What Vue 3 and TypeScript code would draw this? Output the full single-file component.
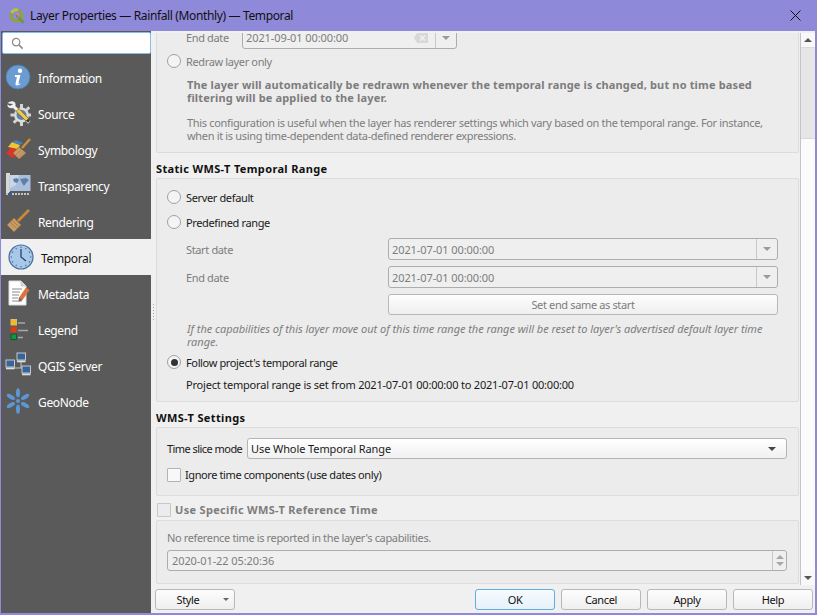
<script setup lang="ts">
const items = [
  { id: 'info', label: 'Information' },
  { id: 'source', label: 'Source' },
  { id: 'symbology', label: 'Symbology' },
  { id: 'transparency', label: 'Transparency' },
  { id: 'rendering', label: 'Rendering' },
  { id: 'temporal', label: 'Temporal' },
  { id: 'metadata', label: 'Metadata' },
  { id: 'legend', label: 'Legend' },
  { id: 'server', label: 'QGIS Server' },
  { id: 'geonode', label: 'GeoNode' },
]
const ticks = Array.from({ length: 12 }, (_, i) => i * 30)
const spokes = [0, 60, 120, 180, 240, 300]
const gearTeeth = [0, 45, 90, 135, 180, 225, 270, 315]
</script>

<template>
  <div class="window">
    <header class="titlebar">
      <svg class="logo" viewBox="0 0 16 16" width="16" height="16">
        <circle cx="7.5" cy="7.5" r="5.6" fill="none" stroke="#86a83c" stroke-width="3" />
        <path d="M2.6 5A5.600 5.600 0 0 1 9 2.100" fill="none" stroke="#b6c24a" stroke-width="3" />
        <path d="M9.500 9.500l5 5.200" stroke="#6f9a34" stroke-width="3" fill="none" />
        <path d="M5.500 9l3-4 1.500 3z" fill="#e8a33a" />
        <circle cx="7.800" cy="8" r="1.300" fill="#d05c3a" />
      </svg>
      <span class="title">Layer Properties — Rainfall (Monthly) — Temporal</span>
      <svg class="close" viewBox="0 0 11 11" width="11" height="11">
        <path d="M.5.5l10 10M10.500.5l-10 10" stroke="#111" stroke-width="1" fill="none" />
      </svg>
    </header>

    <div class="body">
      <aside class="sidebar">
        <div class="search">
          <svg viewBox="0 0 14 14" width="13" height="13">
            <circle cx="5.500" cy="5.500" r="4" fill="none" stroke="#8a8a8a" stroke-width="1.300" />
            <path d="M8.500 8.500l4 4" stroke="#8a8a8a" stroke-width="1.800" />
          </svg>
        </div>
        <ul class="nav">
          <li v-for="item in items" :key="item.id" class="nav-item" :class="{ active: item.id === 'temporal' }">
            <svg class="nav-icon" viewBox="0 0 26 26" width="26" height="26">
              <template v-if="item.id === 'info'">
                <circle cx="13" cy="13" r="12" fill="#6b9bd0" stroke="#4c7fb8" />
                <circle cx="15" cy="6.800" r="2.200" fill="#fff" />
                <path d="M10 11h5.400l-2 8.500c-.1.600.4.700 1.800-.2l.3.700c-1.800 1.600-5.400 2.400-5-.2l1.400-6.800h-2z" fill="#fff" />
              </template>
              <template v-else-if="item.id === 'source'">
                <path
                  v-for="t in gearTeeth"
                  :key="t"
                  d="M15 4h3v4h-3z"
                  fill="#d4d4d4"
                  :transform="`rotate(${t} 16.500 15)`"
                />
                <circle cx="16.500" cy="15" r="7.500" fill="#dcdcdc" />
                <circle cx="16.500" cy="15" r="5" fill="#5e82ad" />
                <path d="M2 3.500c2-3 7-3.500 8.500-.5.500 1.200.4 2 .2 3l4 4-2.400 2.200-4-4c-3 1-6.500-.5-6.300-4.300l3 1.600 2.500-1.200z" fill="#f2f2f2" stroke="#444" stroke-width=".5" />
                <path d="M11 11.500l10 9.500 2.500-2.500-9.500-10z" fill="#ecc94f" stroke="#6b5518" stroke-width=".7" />
                <path d="M21 21l3.500 1.800-1-3.800z" fill="#2a2a2a" />
              </template>
              <template v-else-if="item.id === 'symbology'">
                <path d="M1 17l5-6 7 2-2 7-4 2z" fill="#d8352b" />
                <path d="M3 11l4-5 8 3-2 4z" fill="#edc72f" />
                <path d="M7 6l4-2 7 3-3 2z" fill="#4a80bd" />
                <path d="M8 17l6-6 7 6-7 6z" fill="#c99a68" stroke="#946c40" stroke-width=".6" />
                <path d="M11 19l5-5M13.500 21l5-5" stroke="#946c40" stroke-width=".5" />
                <path d="M17 12l8-9" stroke="#d0913a" stroke-width="2.400" />
              </template>
              <template v-else-if="item.id === 'transparency'">
                <rect x="1" y="1" width="4" height="20" fill="#d8d8d8" />
                <rect x="4.500" y="3" width="21" height="16" fill="#a9bfdc" />
                <path d="M5 3h9l-3 10-6 3z" fill="#c8d6e8" />
                <path d="M8 7l4-1 2 2-2 3-3-1zM15 7l6-1 3 2-3 3-2 3-2-3z" fill="#5f7ea8" />
                <path d="M1 22h24" stroke="#c4c4c4" stroke-width="2" stroke-dasharray="2 1" />
                <rect x="4" y="20" width="2" height="4" fill="#2d5ca0" />
              </template>
              <template v-else-if="item.id === 'rendering'">
                <path d="M2 17l7-7 7 7-7 7z" fill="#c89a66" stroke="#94703f" stroke-width=".7" />
                <path d="M5 14l7 7M7 12l7 7" stroke="#94703f" stroke-width=".6" />
                <path d="M13 13l11-11" stroke="#c88a34" stroke-width="2.600" />
              </template>
              <template v-else-if="item.id === 'temporal'">
                <circle cx="13" cy="13" r="12" fill="#a8c8ea" stroke="#4a6f9c" stroke-width="1.200" />
                <path
                  v-for="t in ticks"
                  :key="t"
                  d="M13 2.600v1.400"
                  stroke="#3f6592"
                  stroke-width="1"
                  :transform="`rotate(${t} 13 13)`"
                />
                <path d="M13 5v8l5 4" fill="none" stroke="#2c4360" stroke-width="1.300" />
              </template>
              <template v-else-if="item.id === 'metadata'">
                <path d="M4 1h12l5 5v19H4z" fill="#fff" stroke="#ddd" />
                <path d="M16 1v5h5" fill="#d8d8d8" stroke="#bbb" stroke-width=".6" />
                <path d="M7 9h10M7 12h8M7 15h7M7 18h6M7 21h10" stroke="#8a8a8a" stroke-width="1" />
                <path d="M14 17.500l7-10 3.500 2.500-7 10-3.800 1.500z" fill="#e0723c" />
                <path d="M14 17.500l-.3 4 3.800-1.500z" fill="#6a6a6a" />
              </template>
              <template v-else-if="item.id === 'legend'">
                <rect x="6" y="3.500" width="5.500" height="5.500" fill="#f4b820" stroke="#d8c070" />
                <rect x="6" y="11" width="5.500" height="5.500" fill="#e23c0c" stroke="#a84a30" />
                <rect x="6" y="18" width="5.500" height="5.500" fill="#13954a" stroke="#0d5a2e" />
                <path d="M13 7h7M13 14.500h10M13 21.500h5" stroke="#a8a8a8" stroke-width="1.600" />
              </template>
              <template v-else-if="item.id === 'server'">
                <path d="M16 10v6H9M16 16h3" stroke="#c4c4c4" fill="none" />
                <rect x="12" y="1" width="8.500" height="7" fill="#36659e" stroke="#c8c8c8" />
                <rect x="12" y="8.500" width="8.500" height="1.800" fill="#dedede" />
                <rect x="1" y="8" width="8.500" height="7" fill="#36659e" stroke="#c8c8c8" />
                <rect x="1" y="15.500" width="8.500" height="1.800" fill="#dedede" />
                <rect x="17" y="14" width="8.500" height="7" fill="#36659e" stroke="#c8c8c8" />
                <rect x="17" y="21.500" width="8.500" height="1.800" fill="#dedede" />
              </template>
              <template v-else>
                <circle cx="13" cy="13" r="2" fill="#5b97d5" />
                <ellipse
                  v-for="s in spokes"
                  :key="s"
                  cx="13"
                  cy="4.800"
                  rx="2"
                  ry="4.600"
                  fill="#5b97d5"
                  :transform="`rotate(${s} 13 13)`"
                />
              </template>
            </svg>
            <span class="nav-label">{{ item.label }}</span>
          </li>
        </ul>
      </aside>

      <div class="splitter"><i v-for="n in 6" :key="n"></i></div>

      <main class="main">
        <div class="scroll">
          <div class="content">
            <section class="group first dim">
              <div class="row end-row">
                <span class="lbl small-lbl">End date</span>
                <div class="combo short">
                  <span class="val">2021-09-01 00:00:00</span>
                  <svg class="clear" viewBox="0 0 14 10" width="14" height="10">
                    <path d="M3 0h11v10H3L0 5z" fill="#d8d8d8" />
                    <path d="M6 2.500l5 5M11 2.500l-5 5" stroke="#f2f2f2" stroke-width="1.400" />
                  </svg>
                  <span class="drop"><b class="arrow"></b></span>
                </div>
              </div>
              <label class="radio-row r-redraw"><span class="radio"></span><span>Redraw layer only</span></label>
              <p class="bold-note">The layer will automatically be redrawn whenever the temporal range is changed, but no time based<br />filtering will be applied to the layer.</p>
              <p class="note">This configuration is useful when the layer has renderer settings which vary based on the temporal range. For instance,<br />when it is using time-dependent data-defined renderer expressions.</p>
            </section>

            <h3 class="heading h-static">Static WMS-T Temporal Range</h3>
            <section class="group g-static">
              <label class="radio-row"><span class="radio"></span><span>Server default</span></label>
              <label class="radio-row r-pre"><span class="radio"></span><span>Predefined range</span></label>
              <div class="dates dim">
                <span class="lbl">Start date</span>
                <div class="combo"><span class="val">2021-07-01 00:00:00</span><span class="drop"><b class="arrow"></b></span></div>
                <span class="lbl">End date</span>
                <div class="combo"><span class="val">2021-07-01 00:00:00</span><span class="drop"><b class="arrow"></b></span></div>
                <span></span>
                <div class="btn set-end">Set end same as start</div>
              </div>
              <p class="italic-note">If the capabilities of this layer move out of this time range the range will be reset to layer's advertised default layer time<br />range.</p>
              <label class="radio-row r-follow"><span class="radio on"></span><span>Follow project's temporal range</span></label>
              <p class="project">Project temporal range is set from 2021-07-01 00:00:00 to 2021-07-01 00:00:00</p>
            </section>

            <h3 class="heading h-wms">WMS-T Settings</h3>
            <section class="group g-wms">
              <div class="slice">
                <span class="slice-lbl">Time slice mode</span>
                <div class="combo active-combo"><span class="val">Use Whole Temporal Range</span><span class="plain-drop"><b class="arrow dark"></b></span></div>
              </div>
              <label class="check-row"><span class="check"></span><span>Ignore time components (use dates only)</span></label>
            </section>

            <h3 class="heading h-ref"><span class="check head-check"></span><span>Use Specific WMS-T Reference Time</span></h3>
            <section class="group g-ref dim">
              <p class="ref-note">No reference time is reported in the layer's capabilities.</p>
              <div class="spin">
                <span class="val">2020-01-22 05:20:36</span>
                <span class="spin-btn"><b class="up"></b><b class="down"></b></span>
              </div>
            </section>
          </div>
          <div class="scrollbar">
            <div class="sb-btn"><b class="up dark-b"></b></div>
            <div class="sb-thumb"></div>
            <div class="sb-track"></div>
            <div class="sb-btn"><b class="down dark-b"></b></div>
          </div>
        </div>

        <footer class="buttons">
          <div class="btn style-btn"><span>Style</span><b class="arrow small"></b></div>
          <div class="spacer"></div>
          <div class="btn action ok">OK</div>
          <div class="btn action">Cancel</div>
          <div class="btn action">Apply</div>
          <div class="btn action">Help</div>
        </footer>
      </main>
    </div>
  </div>
</template>

<style>
html, body { margin: 0; padding: 0; background: #f0f0f0; }
</style>

<style scoped>
.window {
  width: 817px;
  height: 615px;
  box-sizing: border-box;
  display: flex;
  flex-direction: column;
  background: #f0f0f0;
  border: 1px solid #8f89d9;
  border-width: 0 2px 2px 1px;
  font-family: "Noto Sans", "Liberation Sans", sans-serif;
  font-size: 11px;
  letter-spacing: -0.36px;
  color: #1a1a1a;
  overflow: hidden;
}
.titlebar {
  flex: 0 0 31px;
  margin: 0 -2px 0 -1px;
  display: flex;
  align-items: center;
  background: #8f89d9;
  padding: 0 16px 0 9px;
  font-size: 12px;
  color: #101010;
}
.logo { margin-right: 5px; }
.title { flex: 1; }
.close { display: block; }
.body { flex: 1; display: flex; min-height: 0; }

.sidebar { width: 150px; background: #5a5a5a; flex: none; }
.search {
  height: 20px;
  background: #fff;
  border: 1px solid #86bde9;
  border-radius: 2px;
  margin: 1px 0 0 1px;
  display: flex;
  align-items: center;
  padding-left: 8px;
  box-sizing: content-box;
  width: 139px;
}
.nav { list-style: none; margin: 5px 0 0; padding: 0; }
.nav-item {
  height: 36px;
  display: flex;
  align-items: center;
  padding-left: 4px;
  color: #fff;
  font-size: 12px;
}
.nav-icon { flex: none; margin-right: 7px; }
.nav-label { margin-top: 2px; }
.nav-item.active { background: #f0f0f0; color: #111; padding-left: 7px; }

.splitter {
  width: 4px;
  flex: none;
  display: flex;
  flex-direction: column;
  justify-content: center;
  align-items: center;
  gap: 2px;
  padding-bottom: 20px;
}
.splitter i { width: 1px; height: 1px; background: #a8a8a8; }

.main { flex: 1; display: flex; flex-direction: column; min-width: 0; }
.scroll { flex: 0 0 552px; margin-top: 2px; display: flex; overflow: hidden; }
.content { flex: 1; min-width: 0; padding-left: 1px; }

.group {
  box-sizing: border-box;
  background: #ececec;
  border: 1px solid #dcdcdc;
  border-radius: 2px;
  margin-right: 1px;
}
.first { margin-top: -8px; height: 128px; padding: 0 10px; border-top: 0; }
.dim { color: #7d7d7d; }
.row { display: flex; align-items: center; }
.end-row { height: 25px; padding-left: 19px; }
.small-lbl { width: 56px; }
.combo {
  box-sizing: border-box;
  height: 22px;
  display: flex;
  align-items: center;
  border: 1px solid #adadad;
  border-radius: 3px;
  background: #efefef;
  padding-left: 3px;
  flex: 1;
}
.combo.short { flex: none; width: 215px; height: 23px; }
.val { flex: 1; letter-spacing: -0.09px; }
.clear { margin-right: 7px; }
.drop {
  align-self: stretch;
  width: 20px;
  border-left: 1px solid #c8c8c8;
  display: flex;
  align-items: center;
  justify-content: center;
}
.plain-drop { width: 20px; display: flex; justify-content: center; margin-right: 4px; }
.arrow {
  display: block;
  width: 0;
  height: 0;
  border-left: 4px solid transparent;
  border-right: 4px solid transparent;
  border-top: 4px solid #9a9a9a;
}
.arrow.dark { border-top-color: #444; }
.arrow.small { border-left-width: 3px; border-right-width: 3px; border-top-width: 3px; border-top-color: #666; }

.radio-row { display: flex; align-items: center; height: 16px; gap: 5px; }
.radio {
  box-sizing: border-box;
  width: 14px;
  height: 14px;
  border-radius: 50%;
  border: 1px solid #a0a0a0;
  background: #f4f4f4;
  flex: none;
  display: flex;
  align-items: center;
  justify-content: center;
}
.radio.on::after {
  content: "";
  width: 7px;
  height: 7px;
  border-radius: 50%;
  background: #333;
}
.r-redraw { margin-top: 3px; }
.bold-note { margin: 9px 0 0 20px; font-weight: 700; line-height: 13px; letter-spacing: 0.15px; }
.note { margin: 12px 0 0 20px; line-height: 13px; letter-spacing: -0.33px; }

.heading { margin: 0; font-size: 11px; font-weight: 700; line-height: 14px; color: #111; letter-spacing: 0.35px; }
.h-static { margin-top: 9px; }
.g-static { margin-top: 2px; height: 224px; padding: 10px 10px 0; }
.r-pre { margin-top: 9px; }
.dates {
  display: grid;
  grid-template-columns: 202px 390px;
  margin: 8px 0 0 19px;
  align-items: center;
  row-gap: 6px;
}
.set-end { height: 20px; color: #7d7d7d; }
.btn {
  box-sizing: border-box;
  height: 21px;
  border: 1px solid #b8b8b8;
  border-radius: 3px;
  background: linear-gradient(#fdfdfd, #efefef);
  display: flex;
  align-items: center;
  justify-content: center;
}
.italic-note { margin: 7px 0 0 20px; font-style: italic; line-height: 13px; color: #7d7d7d; letter-spacing: -0.04px; }
.r-follow { margin-top: 6px; }
.project { margin: 7px 0 0 19px; line-height: 16px; letter-spacing: -0.2px; }

.h-wms { margin-top: 9px; }
.g-wms { margin-top: 2px; height: 69px; padding: 10px 11px 0 10px; }
.slice { display: flex; align-items: center; }
.slice-lbl { width: 80px; white-space: nowrap; letter-spacing: -0.55px; }
.active-combo { background: linear-gradient(#fff, #f0f0f0); border-color: #b4b4b4; color: #1a1a1a; height: 21px; }
.check-row { display: flex; align-items: center; gap: 4px; margin: 8px 0 0; letter-spacing: -0.4px; }
.check {
  box-sizing: border-box;
  width: 14px;
  height: 14px;
  border: 1px solid #b4b4b4;
  border-radius: 1px;
  background: #f8f8f8;
  flex: none;
}
.h-ref {
  display: flex;
  align-items: center;
  gap: 4px;
  margin-top: 7px;
  height: 14px;
  padding-left: 1px;
  color: #7d7d7d;
  letter-spacing: 0.32px;
}
.head-check { background: #ececec; border-color: #c8c8c8; }
.g-ref { margin-top: 3px; height: 64px; padding: 10px 11px 0 10px; }
.ref-note { margin: 0; line-height: 14px; }
.spin {
  box-sizing: border-box;
  height: 21px;
  display: flex;
  align-items: center;
  margin-top: 5px;
  border: 1px solid #adadad;
  border-radius: 3px;
  padding-left: 4px;
  background: #efefef;
}
.spin-btn {
  align-self: stretch;
  width: 13px;
  border-left: 1px solid #c8c8c8;
  display: flex;
  flex-direction: column;
  align-items: center;
  justify-content: center;
  gap: 3px;
}
.up, .down {
  display: block;
  width: 0;
  height: 0;
  border-left: 4px solid transparent;
  border-right: 4px solid transparent;
}
.up { border-bottom: 4px solid #a8a8a8; }
.down { border-top: 4px solid #a8a8a8; }
.dark-b.up { border-bottom-color: #555; }
.dark-b.down { border-top-color: #555; }

.scrollbar {
  width: 14px;
  flex: none;
  display: flex;
  flex-direction: column;
  border-left: 1px solid #c4c4c4;
  background: #fff;
}
.sb-btn { height: 14px; display: flex; align-items: center; justify-content: center; background: #f8f8f8; }
.sb-thumb { height: 90px; background: #e6e6e6; border: 1px solid #dadada; border-width: 1px 0; }
.sb-track { flex: 1; background: #fbfbfb; }

.buttons { flex: 1; display: flex; align-items: center; gap: 6px; padding: 0 2px 0 0; }
.spacer { flex: 1; }
.style-btn { width: 80px; position: relative; color: #111; padding-right: 14px; }
.style-btn .arrow { position: absolute; right: 5px; top: 8px; }
.action { width: 80px; color: #111; }
.ok { border-color: #62acdf; background: linear-gradient(#f6fbff, #e6f1fa); }
</style>
